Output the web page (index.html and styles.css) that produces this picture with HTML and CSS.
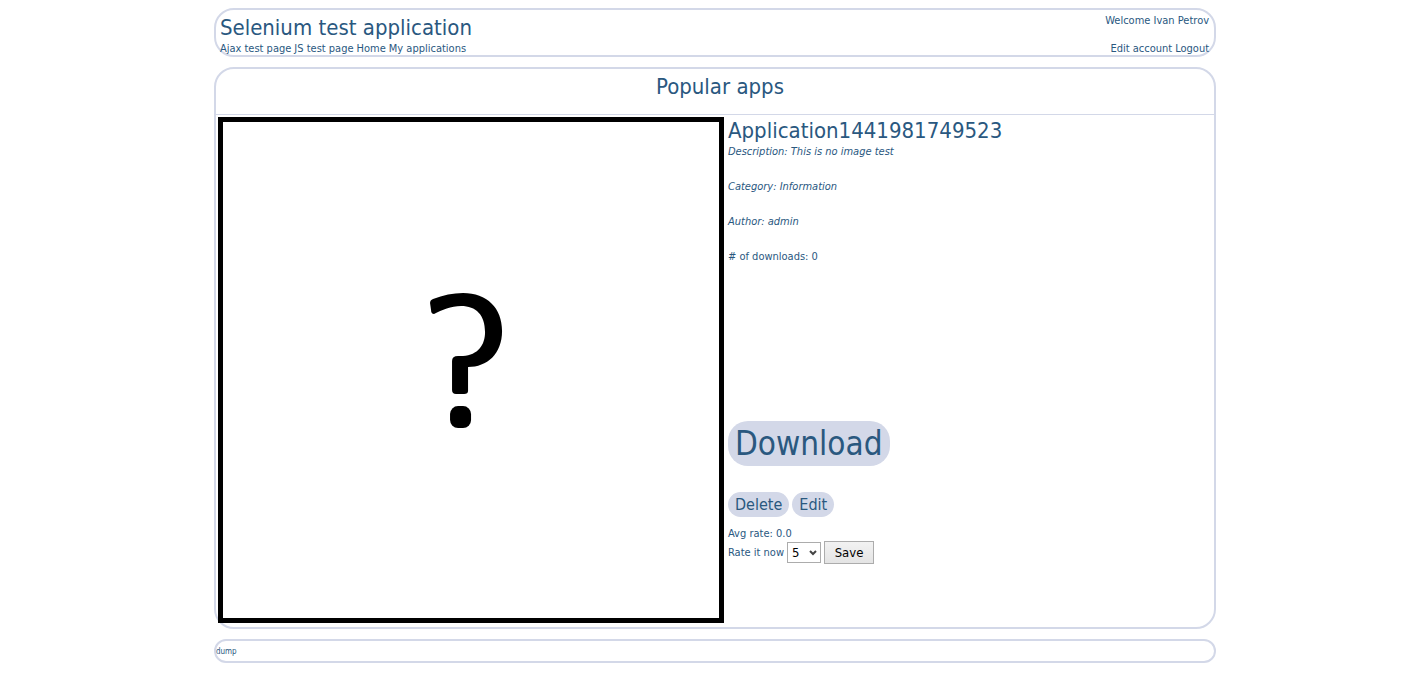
FILE: index.html
```html
<!DOCTYPE html>
<html lang="en">
<head>
<meta charset="utf-8">
<title>Selenium test application</title>
<link rel="stylesheet" href="styles.css">
</head>
<body>
<header class="panel header">
  <div class="brand">
    <h1 class="title">Selenium test application</h1>
    <nav class="links">
      <a href="#">Ajax test page</a>
      <a href="#">JS test page</a>
      <a href="#">Home</a>
      <a href="#">My applications</a>
    </nav>
  </div>
  <div class="account">
    <span>Welcome Ivan Petrov</span>
    <nav class="links">
      <a href="#">Edit account</a>
      <a href="#">Logout</a>
    </nav>
  </div>
</header>

<main class="panel content">
  <h2 class="title popular">Popular apps</h2>
  <section class="app">
    <svg class="app-image" viewBox="0 0 496 496" role="img" aria-label="No image">
      <path d="M207 181Q207 178 210 177Q225 171 240 171C264 171 279 186 279 209C279 232 264 245 245 245V269Q245 272 241 272H233Q229 272 229 268V239Q229 234 235 234H240C255 233 262 223 262 210C262 193 253 184 238 184C228 184 219 188 211 192Q208 192 208 188Z"/>
      <rect x="227" y="284" width="21" height="22" rx="8"/>
    </svg>
    <div class="details">
      <h3 class="title">Application1441981749523</h3>
      <p class="fact italic">Description: This is no image test</p>
      <p class="fact italic">Category: Information</p>
      <p class="fact italic">Author: admin</p>
      <p class="fact"># of downloads: 0</p>
      <div class="download"><a class="pill large" href="#">Download</a></div>
      <div class="actions">
        <a class="pill" href="#">Delete</a>
        <a class="pill" href="#">Edit</a>
      </div>
      <p class="average">Avg rate: 0.0</p>
      <form class="rating">
        <label for="rate">Rate it now</label>
        <span class="picker">
          <select id="rate">
            <option>1</option><option>2</option><option>3</option><option>4</option><option selected>5</option>
          </select>
          <svg class="chevron" viewBox="0 0 8 6" aria-hidden="true"><path d="M1 1L4 4L7 1"/></svg>
        </span>
        <button type="button">Save</button>
      </form>
    </div>
  </section>
</main>

<footer class="panel footer"><a href="#">dump</a></footer>
</body>
</html>
```
FILE: styles.css
```css
body {
  margin: 8px 0;
  background: #fff;
  color: #2a587f;
  font: 11px/14px Tahoma, "DejaVu Sans Condensed", "DejaVu Sans", sans-serif;
}
a {
  color: inherit;
  text-decoration: none;
}
h1, h2, h3, p {
  margin: 0;
}
.panel {
  width: 70%;
  margin: 0 0 10px 15%;
  border: 2px solid #d3d8e8;
  border-radius: 20px;
}
.header {
  display: flex;
  justify-content: space-between;
}
.brand {
  padding: 4px 0 0 4px;
}
.account {
  display: flex;
  flex-direction: column;
  justify-content: space-between;
  padding: 4px 5px 0 0;
  text-align: right;
}
.links {
  display: flex;
  gap: 3px;
  padding-top: 2px;
  line-height: 12px;
}
.account .links {
  justify-content: flex-end;
}
.title {
  font-size: 22px;
  font-weight: normal;
  line-height: 27px;
}
.popular {
  padding: 4px 0 14px 10px;
  border-bottom: 1px solid #d3d8e8;
  text-align: center;
}
.app {
  display: grid;
  grid-template-columns: minmax(0, 506fr) minmax(0, 486fr);
  gap: 4px;
  padding: 2px 0 4px 2px;
}
.app-image {
  box-sizing: border-box;
  width: 100%;
  border: 5px solid #000;
}
.fact {
  margin-bottom: 19px;
  line-height: 16px;
}
.italic {
  font-style: italic;
}
.download {
  margin-top: 156px;
}
.pill {
  display: inline-block;
  padding: 0 7px;
  border-radius: 20px;
  background: #d3d8e8;
  font-size: 16px;
  line-height: 25px;
}
.large {
  font-size: 33px;
  line-height: 45px;
}
.actions {
  display: flex;
  gap: 3px;
  margin-top: 26px;
}
.average {
  margin-top: 9px;
  line-height: 15px;
}
.rating {
  display: flex;
  align-items: center;
  gap: 3px;
}
.picker {
  display: grid;
  align-items: center;
}
.picker > * {
  grid-area: 1 / 1;
}
select, button {
  box-sizing: border-box;
  border: 1px solid #acacac;
  border-radius: 0;
  color: #000;
  font: inherit;
  font-size: 13px;
}
select {
  width: 34px;
  height: 21px;
  padding: 0 4px;
  appearance: none;
  background: #fff;
}
.chevron {
  width: 8px;
  margin-right: 4px;
  justify-self: end;
  fill: none;
  stroke: #444;
  stroke-width: 2;
  pointer-events: none;
}
button {
  width: 50px;
  height: 23px;
  padding: 0;
  background: linear-gradient(#f2f2f2, #e4e4e4);
}
.footer {
  padding-top: 2px;
  font-size: 8px;
  line-height: 18px;
}
```
